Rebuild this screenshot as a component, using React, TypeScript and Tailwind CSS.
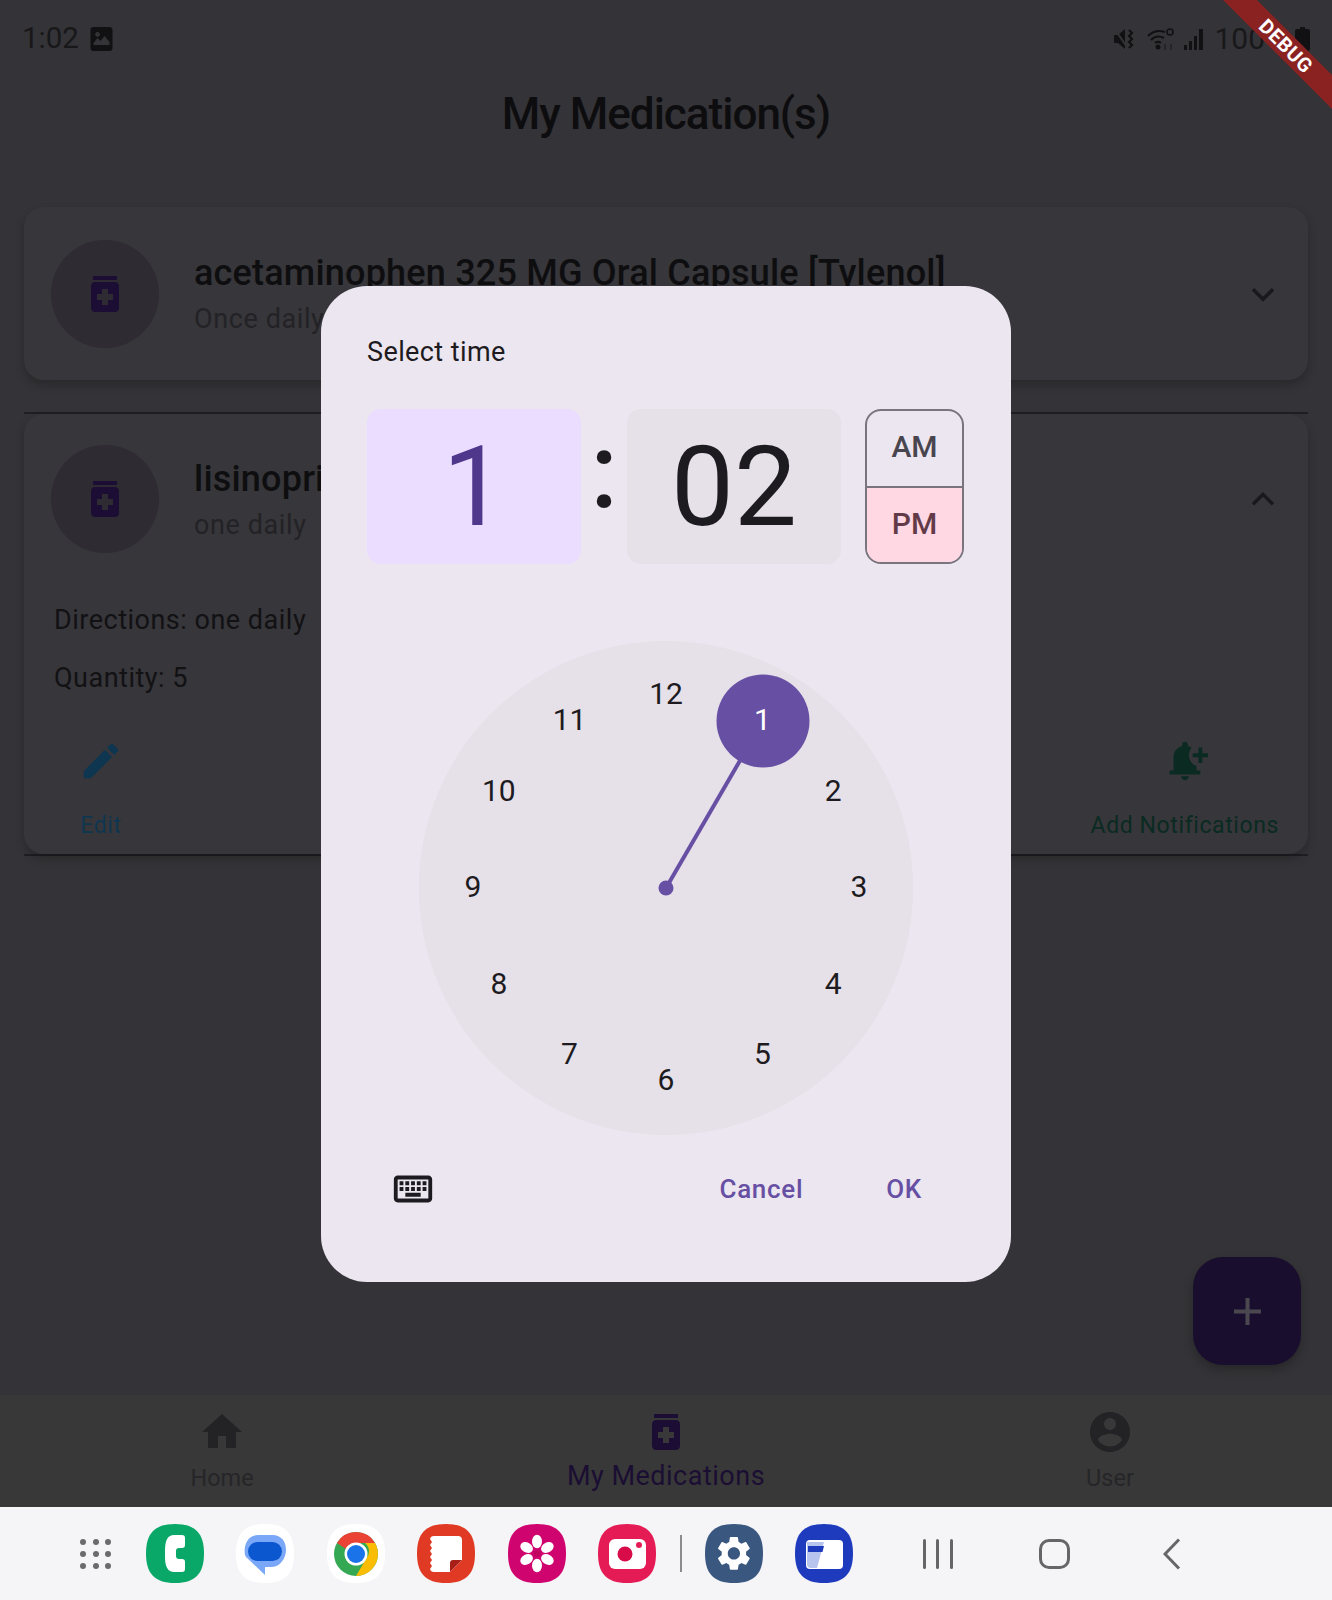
import type { ReactNode } from 'react';

const medicationPath = 'M6 3h12v2H6zm11 3H7c-1.1 0-2 .9-2 2v11c0 1.1.9 2 2 2h10c1.1 0 2-.9 2-2V8c0-1.1-.9-2-2-2zm-1 9h-2.5v2.5h-3V15H8v-3h2.5V9.5h3V12H16v3z';
const gearPath = 'M19.14 12.94c.04-.3.06-.61.06-.94 0-.32-.02-.64-.07-.94l2.03-1.58c.18-.14.23-.41.12-.61l-1.92-3.32c-.12-.22-.37-.29-.59-.22l-2.39.96c-.5-.38-1.03-.7-1.62-.94l-.36-2.54c-.04-.24-.24-.41-.48-.41h-3.84c-.24 0-.43.17-.47.41l-.36 2.54c-.59.24-1.13.57-1.62.94l-2.39-.96c-.22-.08-.47 0-.59.22L2.74 8.87c-.12.21-.08.47.12.61l2.03 1.58c-.05.3-.09.63-.09.94s.02.64.07.94l-2.03 1.58c-.18.14-.23.41-.12.61l1.92 3.32c.12.22.37.29.59.22l2.39-.96c.5.38 1.03.7 1.62.94l.36 2.54c.05.24.24.41.48.41h3.84c.24 0 .44-.17.47-.41l.36-2.54c.59-.24 1.13-.56 1.62-.94l2.39.96c.22.08.47 0 .59-.22l1.92-3.32c.12-.22.07-.47-.12-.61l-2.01-1.58zM12 15.6c-1.98 0-3.6-1.62-3.6-3.6s1.62-3.6 3.6-3.6 3.6 1.62 3.6 3.6-1.62 3.6-3.6 3.6z';

const dialNumbers = ['12', '1', '2', '3', '4', '5', '6', '7', '8', '9', '10', '11'];

function MatIcon({ d, className }: { d: string; className: string }) {
  return (
    <svg viewBox="0 0 24 24" fill="currentColor" className={className}>
      <path d={d} />
    </svg>
  );
}

function Avatar() {
  return (
    <div className="flex h-[108px] w-[108px] shrink-0 items-center justify-center rounded-full bg-[#2e2b32]">
      <MatIcon d={medicationPath} className="h-[48px] w-[48px] text-[#1b0d33]" />
    </div>
  );
}

function Chevron({ up }: { up?: boolean }) {
  return (
    <svg viewBox="0 0 24 24" className="h-[32px] w-[32px] text-[#19181c]" fill="none" stroke="currentColor" strokeWidth="2.6">
      <path d={up ? 'M4.5 16 12 8.5 19.5 16' : 'M4.5 8.5 12 16l7.5-7.5'} />
    </svg>
  );
}

function StatusBar() {
  return (
    <div className="flex h-[78px] items-center justify-between pl-[22px] pr-[22px] text-[#18181a]">
      <div className="flex items-center gap-[11px]">
        <span className="text-[29.5px] leading-none">1:02</span>
        <svg viewBox="0 0 22 24" className="h-[24px] w-[23px]">
          <path fillRule="evenodd" fill="#111113" d="M3 0h16a3 3 0 0 1 3 3v18a3 3 0 0 1-3 3H3a3 3 0 0 1-3-3V3a3 3 0 0 1 3-3zM3 18h16v-3l-5-6-4 5-3-3-4 5zM7 5a2.4 2.4 0 1 0 .01 0z" />
        </svg>
      </div>
      <div className="flex items-center">
        <svg viewBox="0 0 24 24" className="mr-[10px] h-[24px] w-[24px] text-[#111113]" fill="currentColor">
          <path d="M1 8h4l7-6v20l-7-6H1z" />
          <path d="M1 1l15 22" stroke="#343337" strokeWidth="2" />
          <path d="M16 3l3 3-3 3 3 3-3 3 3 3-3 3" fill="none" stroke="currentColor" strokeWidth="2.2" />
        </svg>
        <svg viewBox="0 0 28 24" className="mr-[9px] h-[24px] w-[28px] text-[#111113]" fill="none" stroke="currentColor" strokeWidth="2">
          <path d="M1 9c5-5 11-6 17-4M4 13c4-4 9-4 13-2M8 16c2-1.500 4-1.500 6 0" />
          <circle cx="11" cy="20" r="1.500" fill="currentColor" />
          <path d="M18 17v6M24 23v-6" strokeWidth="1.400" opacity="0.6" />
          <circle cx="23" cy="5" r="3" strokeWidth="1.600" />
        </svg>
        <svg viewBox="0 0 21 24" className="mr-[9px] h-[24px] w-[21px]" fill="#111113">
          <rect x="0" y="18" width="3" height="5" />
          <rect x="5" y="14" width="3" height="9" />
          <rect x="10" y="9" width="3" height="14" />
          <rect x="15" y="2" width="4" height="21" />
        </svg>
        <span className="mr-[8px] text-[30px] leading-none">100%</span>
        <svg viewBox="0 0 15 24" className="h-[24px] w-[15px]" fill="#111113">
          <path d="M5 0h5v2h3a2 2 0 0 1 2 2v18a2 2 0 0 1-2 2H2a2 2 0 0 1-2-2V4a2 2 0 0 1 2-2h3z" />
        </svg>
      </div>
    </div>
  );
}

function ActionButton({ icon, label, color }: { icon: ReactNode; label: string; color: string }) {
  return (
    <div className={`flex flex-col items-center ${color}`}>
      {icon}
      <span className="mt-[28px] text-[23px] leading-[28px] tracking-[0.6px]">{label}</span>
    </div>
  );
}

function MedicationCards() {
  return (
    <div className="flex-1 px-[24px] pt-[57px]">
      <div className="flex h-[173px] items-center rounded-[20px] bg-[#37363a] pl-[27px] pr-[29px] shadow-[0_5px_10px_rgba(0,0,0,0.22)]">
        <Avatar />
        <div className="ml-[35px] flex-1">
          <div className="text-[36px] font-medium leading-[42px] tracking-[0.2px] text-[#0e0e10]">acetaminophen 325 MG Oral Capsule [Tylenol]</div>
          <div className="mt-[9px] text-[27px] leading-[32px] tracking-[0.6px] text-[#232226]">Once daily</div>
        </div>
        <Chevron />
      </div>
      <div className="mt-[32px] h-[444px] border-y-2 border-y-[#1f1e22]">
        <div className="h-full rounded-[20px] bg-[#37363a] shadow-[0_5px_10px_rgba(0,0,0,0.22)]">
          <div className="flex items-center pl-[27px] pr-[29px] pt-[31px]">
            <Avatar />
            <div className="ml-[35px] flex-1">
              <div className="text-[36px] font-medium leading-[42px] tracking-[0.2px] text-[#0e0e10]">lisinopril 10 MG Oral Tablet</div>
              <div className="mt-[9px] text-[27px] leading-[32px] tracking-[0.6px] text-[#232226]">one daily</div>
            </div>
            <Chevron up />
          </div>
          <div className="pl-[30px] pt-[51px] text-[27px] leading-[32px] tracking-[0.5px] text-[#121114]">
            <div>Directions: one daily</div>
            <div className="mt-[26px]">Quantity: 5</div>
          </div>
          <div className="flex items-start justify-between pl-[54px] pr-[29px] pt-[44px]">
            <ActionButton
              color="text-[#0f3650]"
              label="Edit"
              icon={<MatIcon d="M3 17.25V21h3.75L17.81 9.940l-3.750-3.750L3 17.250zM20.710 7.040c.39-.39.39-1.020 0-1.410l-2.340-2.340c-.39-.39-1.020-.39-1.410 0l-1.830 1.830 3.750 3.750 1.830-1.830z" className="h-[46px] w-[46px]" />}
            />
            <ActionButton
              color="text-[#0a2a22]"
              label="Add Notifications"
              icon={<MatIcon d="M10 20h4c0 1.100-.9 2-2 2s-2-.9-2-2zm4-11c0 2.610 1.670 4.830 4 5.650V17h2v2H4v-2h2v-7c0-2.790 1.910-5.140 4.500-5.800v-.7c0-.83.67-1.500 1.500-1.500s1.500.67 1.500 1.500v.7c.71.18 1.360.49 1.950.9C14.540 6.140 14 7.510 14 9zm10-1h-3V5h-2v3h-3v2h3v3h2v-3h3V8z" className="h-[46px] w-[46px]" />}
            />
          </div>
        </div>
      </div>
    </div>
  );
}

function BottomNav() {
  return (
    <div className="grid h-[112px] grid-cols-3 bg-[#383838]">
      <div className="flex flex-col items-center pt-[13px] text-[#232224]">
        <MatIcon d="M10 20v-6h4v6h5v-8h3L12 3 2 12h3v8z" className="h-[48px] w-[48px]" />
        <span className="mt-[8px] text-[23.5px] leading-[28px] text-[#262528]">Home</span>
      </div>
      <div className="flex flex-col items-center pt-[13px] text-[#1b0d33]">
        <MatIcon d={medicationPath} className="h-[48px] w-[48px]" />
        <span className="mt-[4px] text-[27px] leading-[32px] tracking-[0.5px] text-[#1b0e33]">My Medications</span>
      </div>
      <div className="flex flex-col items-center pt-[13px] text-[#232224]">
        <MatIcon d="M12 2C6.480 2 2 6.480 2 12s4.480 10 10 10 10-4.480 10-10S17.520 2 12 2zm0 3c1.660 0 3 1.340 3 3s-1.340 3-3 3-3-1.340-3-3 1.340-3 3-3zm0 14.200c-2.500 0-4.710-1.280-6-3.220.03-1.990 4-3.080 6-3.080 1.990 0 5.970 1.090 6 3.080-1.290 1.940-3.500 3.220-6 3.220z" className="h-[48px] w-[48px]" />
        <span className="mt-[8px] text-[23.5px] leading-[28px] text-[#262528]">User</span>
      </div>
    </div>
  );
}

function AppIcon({ fill, children }: { fill: string; children: ReactNode }) {
  return (
    <svg viewBox="0 0 58 59" className="h-[59px] w-[58px] shrink-0">
      <path fill={fill} d="M29 0C50 0 58 10 58 29.500 58 49 50 59 29 59 8 59 0 49 0 29.500 0 10 8 0 29 0Z" />
      {children}
    </svg>
  );
}

function Dock() {
  return (
    <div className="flex h-[93px] items-center bg-[#f5f5f7] pl-[80px]">
      <div className="grid w-[32px] grid-cols-3 gap-x-[6px] gap-y-[6px]">
        {Array.from({ length: 9 }).map((_, i) => (
          <span key={i} className="h-[6px] w-[6px] rounded-full bg-[#6b6b6d]" />
        ))}
      </div>
      <div className="ml-[34px] flex items-center gap-[32.4px]">
        <AppIcon fill="#0aa868">
          <path fill="#fff" d="M28 11H36Q39 11 39 14V21Q39 24 36 24H33Q30 24 30 27V32Q30 35 33 35H36Q39 35 39 38V45Q39 48 36 48H28Q19 48 19 33V26Q19 11 28 11Z" />
        </AppIcon>
        <AppIcon fill="#ffffff">
          <path fill="#7aa7f7" d="M22 11h14c10 0 14 7 14 15s-6 17-14 17h-7v8L10 33c-3-4-2-22 12-22z" />
          <rect x="12" y="18" width="34" height="19" rx="9.500" fill="#0b57d0" />
        </AppIcon>
        <AppIcon fill="#ffffff">
          <circle cx="29" cy="30" r="22" fill="#34a853" />
          <path fill="#ea4335" d="M29 8a22 22 0 0 1 19 11H29a11 11 0 0 0-10 6L10 19a22 22 0 0 1 19-11z" />
          <path fill="#fbbc04" d="M48 19a22 22 0 0 1-19 33l10-17a11 11 0 0 0-1-16z" />
          <circle cx="29" cy="30" r="11.500" fill="#fff" />
          <circle cx="29" cy="30" r="9" fill="#1a73e8" />
        </AppIcon>
        <AppIcon fill="#e03a24">
          <path fill="#fff" d="M17 12h24a4 4 0 0 1 4 4v20L33 48H17a4 4 0 0 1-4-3l2-3-2-3 2-3-2-3 2-3-2-3 2-3-2-3 2-3-2-3a4 4 0 0 1 4-3z" />
          <path fill="#a81f18" d="M33 48V39q0-3 3-3h9z" />
        </AppIcon>
        <AppIcon fill="#d0046f">
          {[0, 60, 120, 180, 240, 300].map((deg) => (
            <ellipse key={deg} cx="29" cy="17.500" rx="5" ry="6.700" fill="#fff" transform={`rotate(${deg} 29 29.500)`} />
          ))}
          <circle cx="29" cy="29.500" r="3.500" fill="#c0035f" />
        </AppIcon>
        <AppIcon fill="#e51b56">
          <rect x="11" y="15" width="37" height="30" rx="6" fill="#fff" />
          <circle cx="27" cy="30" r="7.500" fill="#d80c48" />
          <circle cx="41" cy="21" r="3" fill="#e51b56" />
        </AppIcon>
      </div>
      <div className="ml-[24px] h-[37px] w-[2px] bg-[#8b8b8d]" />
      <div className="ml-[23px] flex items-center gap-[32px]">
        <AppIcon fill="#3a5780">
          <g transform="translate(8.500 9) scale(1.700)">
            <path fill="#fff" d={gearPath} />
          </g>
        </AppIcon>
        <AppIcon fill="#1f3bbd">
          <rect x="11" y="16" width="37" height="29" rx="4" fill="#fff" />
          <path fill="#b7c4ee" d="M12 18h17l-7 26h-6a4 4 0 0 1-4-4z" />
          <path fill="#1f3bbd" d="M13 22h16l-1.500 6H13z" />
        </AppIcon>
      </div>
      <div className="ml-[70px] flex items-center gap-[10.5px]">
        <span className="h-[30px] w-[3px] rounded-full bg-[#666668]" />
        <span className="h-[30px] w-[3px] rounded-full bg-[#666668]" />
        <span className="h-[30px] w-[3px] rounded-full bg-[#666668]" />
      </div>
      <div className="ml-[86px] h-[30px] w-[31px] rounded-[10px] border-[3px] border-[#666668]" />
      <svg viewBox="0 0 18 32" fill="none" stroke="#666668" strokeWidth="3" className="ml-[93px] h-[32px] w-[18px]">
        <path d="M16 1.500 2 16l14 14.500" />
      </svg>
    </div>
  );
}

function ClockDial() {
  return (
    <div className="relative mx-auto mt-[77px] h-[494px] w-[494px] rounded-full bg-[#e6e0e9]">
      <svg viewBox="0 0 494 494" className="absolute inset-0 h-full w-full">
        <line x1="247" y1="247" x2="344" y2="80" stroke="#6750a4" strokeWidth="4" />
        <circle cx="247" cy="247" r="7.500" fill="#6750a4" />
        <circle cx="344" cy="80" r="46.500" fill="#6750a4" />
      </svg>
      {dialNumbers.map((label, i) => {
        const angle = (i * Math.PI) / 6;
        return (
          <span
            key={label}
            className={`absolute flex h-[40px] w-[60px] -translate-x-1/2 -translate-y-1/2 items-center justify-center text-[30px] ${label === '1' ? 'text-white' : 'text-[#1d1b20]'}`}
            style={{ left: 247 + 193 * Math.sin(angle), top: 245.5 - 193 * Math.cos(angle) }}
          >
            {label}
          </span>
        );
      })}
    </div>
  );
}

function TimePickerDialog() {
  return (
    <div className="absolute left-[321px] top-[286px] h-[996px] w-[690px] rounded-[46px] bg-[#ece6f0] px-[46px] pt-[50px]">
      <div className="text-[27px] leading-[32px] tracking-[0.4px] text-[#1d1b20]">Select time</div>
      <div className="mt-[41px] flex h-[155px] items-center">
        <div className="flex h-full w-[214px] items-center justify-center rounded-[14px] bg-[#eaddff] text-[112px] leading-none text-[#4f378b]">1</div>
        <div className="flex w-[46px] -translate-y-[15px] items-center justify-center text-[105px] font-medium leading-none text-[#1d1b20]">:</div>
        <div className="flex h-full w-[214px] items-center justify-center rounded-[14px] bg-[#e6e0e9] text-[112px] leading-none text-[#1d1b20]">02</div>
        <div className="ml-[24px] flex h-full w-[99px] flex-col overflow-hidden rounded-[16px] border-2 border-[#79747e] text-[30px] font-medium">
          <div className="flex h-[77px] items-center justify-center border-b-2 border-b-[#79747e] pb-[5px] text-[#49454f]">AM</div>
          <div className="flex flex-1 items-center justify-center bg-[#ffd8e4] pb-[3px] text-[#633b48]">PM</div>
        </div>
      </div>
      <ClockDial />
      <div className="mt-[31px] flex h-[46px] items-center pl-[23px] pr-[43px]">
        <MatIcon
          d="M20 7v10H4V7h16m0-2H4c-1.100 0-1.990.9-1.990 2L2 17c0 1.100.9 2 2 2h16c1.100 0 2-.9 2-2V7c0-1.100-.9-2-2-2zm-9 3h2v2h-2zm0 3h2v2h-2zM8 8h2v2H8zm0 3h2v2H8zm-3 0h2v2H5zm0-3h2v2H5zm3 6h8v2H8zm6-3h2v2h-2zm0-3h2v2h-2zm3 3h2v2h-2zm0-3h2v2h-2z"
          className="h-[46px] w-[46px] text-[#1d1b20]"
        />
        <span className="ml-auto text-[26px] font-medium tracking-[0.7px] text-[#6750a4]">Cancel</span>
        <span className="ml-[83px] text-[26px] font-medium tracking-[0.7px] text-[#6750a4]">OK</span>
      </div>
    </div>
  );
}

export default function App() {
  return (
    <div className="relative flex h-[1600px] w-[1332px] flex-col overflow-hidden bg-[#343337] [font-family:Roboto,sans-serif]">
      <StatusBar />
      <div className="flex h-[72px] items-center justify-center text-[44px] font-medium tracking-[-1px] text-[#0d0d0f]">My Medication(s)</div>
      <MedicationCards />
      <BottomNav />
      <Dock />
      <div className="absolute left-[1193px] top-[1257px] flex h-[108px] w-[108px] items-center justify-center rounded-[30px] bg-[#1a0e2e] shadow-[0_5px_10px_rgba(0,0,0,0.25)]">
        <svg viewBox="0 0 27 27" className="h-[27px] w-[27px]" fill="none" stroke="#4a474e" strokeWidth="4">
          <path d="M13.500 0v27M0 13.500h27" />
        </svg>
      </div>
      <TimePickerDialog />
      <div className="absolute left-[1186px] top-[34px] flex h-[24px] w-[200px] rotate-45 items-center justify-center bg-[#8a2222] text-[20px] font-bold leading-none tracking-[0.5px] text-white">DEBUG</div>
    </div>
  );
}
